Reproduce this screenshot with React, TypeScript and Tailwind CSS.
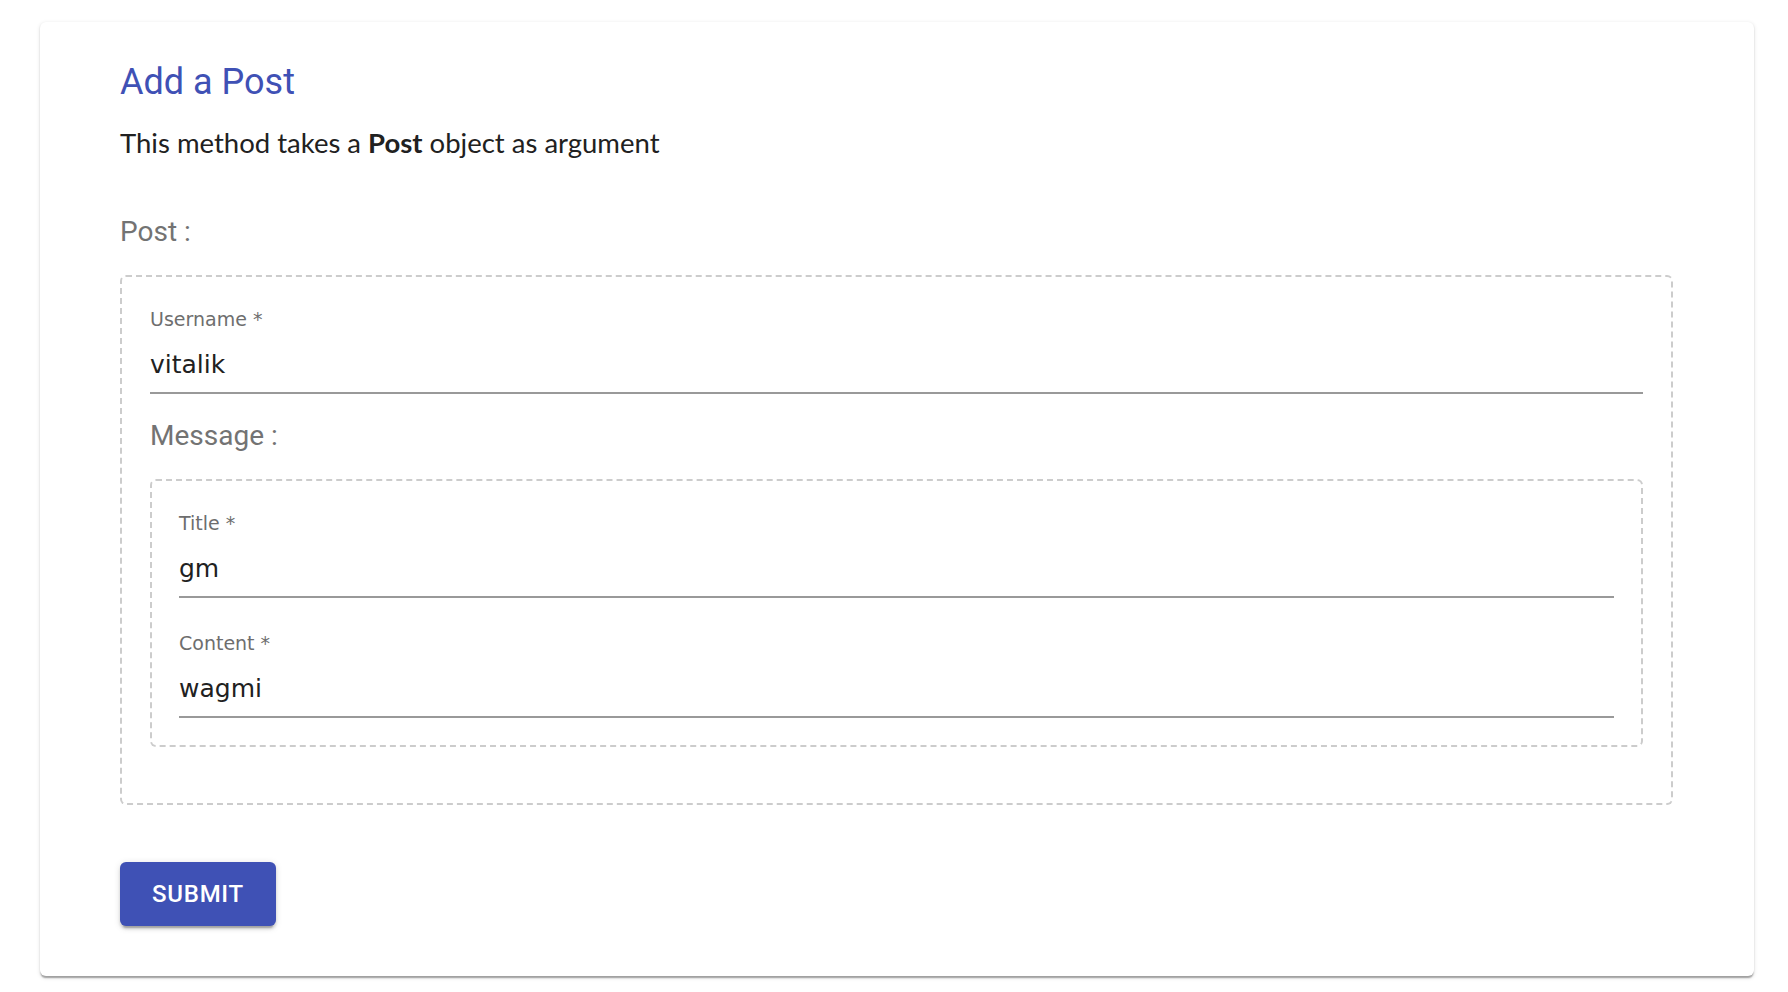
import { useState } from "react";

type FieldProps = {
    label: string;
    value: string;
    onChange: (v: string) => void;
};

// standard text field (label, input, underline); page is rendered at 1.5x
function Field({ label, value, onChange }: FieldProps) {
    return (
        <label className="flex flex-col font-['DejaVu_Sans',sans-serif]">
            <span className="h-[24px] text-[19px] leading-[24px] text-[#6e6e6e]">
                {label} *
            </span>
            <input
                value={value}
                onChange={(e) => onChange(e.target.value)}
                className="mt-[17px] h-[34px] w-full bg-transparent p-0 text-[25px] text-[#212121] outline-none"
            />
            <span className="mt-[10px] block h-[2px] bg-[#999999]" />
        </label>
    );
}

export default function App() {
    const [username, setUsername] = useState("vitalik");
    const [title, setTitle] = useState("gm");
    const [content, setContent] = useState("wagmi");

    return (
        <div className="min-h-screen bg-white pt-[22px]">
            <div className="ml-[40px] w-[1714px] rounded-[6px] bg-white pt-[36px] pb-[50px] pl-[80px] pr-[81px] shadow-[0_3px_1.5px_-1.5px_rgba(0,0,0,0.2),0_1.5px_1.5px_0_rgba(0,0,0,0.14),0_1.5px_4.5px_0_rgba(0,0,0,0.12)]">
                {/* Heading */}
                <h1 className="h-[48px] font-[Roboto,sans-serif] text-[36px] leading-[48px] text-[#3f51b5]">
                    Add a Post
                </h1>
                <p className="mt-[19px] h-[36px] font-[Lato,sans-serif] text-[27.5px] leading-[36px] text-[#212121]">
                    This method takes a <b className="font-bold">Post</b> object as argument
                </p>

                {/* Post object */}
                <div className="mt-[53px] h-[36px] font-[Roboto,sans-serif] text-[28px] leading-[36px] text-[#737373]">
                    Post :
                </div>
                <div className="mt-[25px] rounded-[6px] border-2 border-dashed border-[#cccccc] px-[28px] pt-[30px] pb-[56px]">
                    <Field label="Username" value={username} onChange={setUsername} />

                    <div className="mt-[24px] h-[36px] font-[Roboto,sans-serif] text-[28px] leading-[36px] text-[#737373]">
                        Message :
                    </div>
                    <div className="mt-[25px] flex flex-col gap-[33px] rounded-[6px] border-2 border-dashed border-[#cccccc] px-[27px] pt-[30px] pb-[27px]">
                        <Field label="Title" value={title} onChange={setTitle} />
                        <Field label="Content" value={content} onChange={setContent} />
                    </div>
                </div>

                <button
                    type="button"
                    className="mt-[57px] flex h-[64px] w-[156px] items-center justify-center rounded-[6px] bg-[#3f51b5] font-[Roboto,sans-serif] text-[24px] font-medium tracking-[0.03em] text-white shadow-[0_4.5px_1.5px_-3px_rgba(0,0,0,0.2),0_3px_3px_0_rgba(0,0,0,0.14),0_1.5px_7.5px_0_rgba(0,0,0,0.12)]"
                >
                    SUBMIT
                </button>
            </div>
        </div>
    );
}
